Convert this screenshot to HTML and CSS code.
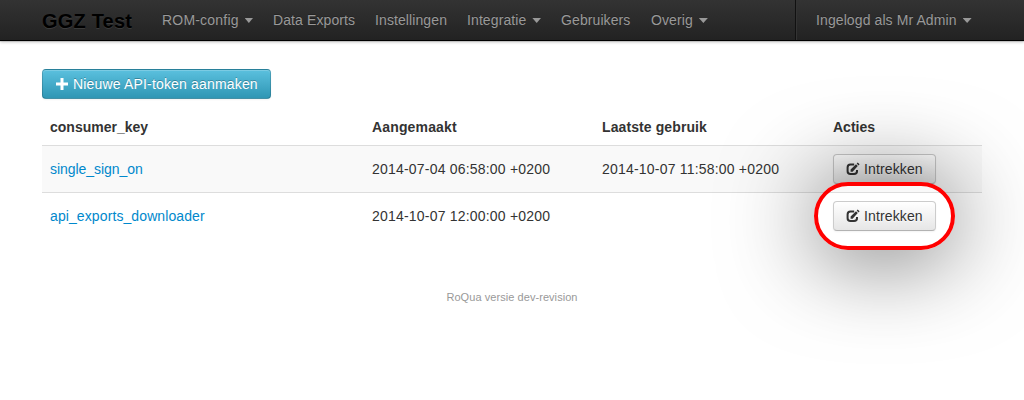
FILE: index.html
```html
<!DOCTYPE html>
<html lang="nl">
<head>
<meta charset="utf-8">
<title>GGZ Test</title>
<link rel="stylesheet" href="styles.css">
</head>
<body>
<svg class="sprite" aria-hidden="true">
  <symbol id="edit" viewBox="0 0 14 14">
    <path d="M8.2 2.6H4.5Q1.6 2.6 1.6 5.4V9.2Q1.6 12 4.5 12H8Q11 12 11 9.2V8" fill="none" stroke="currentColor" stroke-width="2"/>
    <path d="M4.6 9.8V7.6L10 2.3L11.8 4.1L6.6 9.8ZM10.7 1.5L11.7.5L13.6 2.3L12.5 3.4Z" fill="currentColor"/>
  </symbol>
</svg>
<header class="navbar">
  <a class="brand">GGZ Test</a>
  <nav class="nav">
    <a class="item rom">ROM-config<b class="caret"></b></a>
    <a class="item data">Data Exports</a>
    <a class="item inst">Instellingen</a>
    <a class="item integ">Integratie<b class="caret"></b></a>
    <a class="item users">Gebruikers</a>
    <a class="item">Overig<b class="caret"></b></a>
  </nav>
  <div class="account"><a class="item">Ingelogd als Mr Admin<b class="caret"></b></a></div>
</header>
<main class="container">
  <a class="btn btn-info"><svg class="plus" viewBox="0 0 12 12"><path d="M4.5 0h3v4.5H12v3H7.5V12h-3V7.5H0v-3h4.5z" fill="#fff"/></svg><span>Nieuwe API-token aanmaken</span></a>
  <table class="table">
    <thead><tr><th class="key">consumer_key</th><th class="created">Aangemaakt</th><th class="used">Laatste gebruik</th><th>Acties</th></tr></thead>
    <tbody>
      <tr class="odd"><td><a class="link sso">single_sign_on</a></td><td class="date">2014-07-04 06:58:00 +0200</td><td class="date">2014-10-07 11:58:00 +0200</td><td><a class="btn"><svg class="edit"><use href="#edit"/></svg><span>Intrekken</span></a></td></tr>
      <tr><td><a class="link">api_exports_downloader</a></td><td class="date">2014-10-07 12:00:00 +0200</td><td></td><td><div class="target"><a class="btn"><svg class="edit"><use href="#edit"/></svg><span>Intrekken</span></a><i class="ring"></i></div></td></tr>
    </tbody>
  </table>
  <footer class="footer">RoQua versie dev-revision</footer>
</main>
</body>
</html>
```
FILE: styles.css
```css
* { box-sizing: border-box; }
html { height: 100%; }
body { margin: 0; min-height: 100%; overflow: hidden; background: #fff; color: #333; font: 14px/20px "Liberation Sans", Arial, sans-serif; }
.sprite { position: absolute; width: 0; height: 0; }
.navbar { display: flex; height: 41px; padding: 0 42px; background: linear-gradient(#333, #222); border-bottom: 1px solid #000; box-shadow: 0 1px 3px rgba(0,0,0,.25), 0 1px 0 rgba(0,0,0,.1); }
.brand { width: 110px; padding-top: 11px; color: #000; font-size: 20px; font-weight: bold; letter-spacing: .2px; text-shadow: 0 1px 0 rgba(255,255,255,.1), 0 0 30px rgba(255,255,255,.125); white-space: nowrap; }
.nav { display: flex; }
.item { display: flex; padding: 10px; color: #999; letter-spacing: .1px; text-shadow: 0 -1px 0 rgba(0,0,0,.25); white-space: nowrap; }
.rom { width: 111px; letter-spacing: .2px; }
.data { width: 102px; }
.inst { width: 92px; }
.integ { width: 94px; }
.users { width: 90px; }
.caret { width: 9px; height: 5px; margin: 8px 0 0 6px; background: #999; clip-path: polygon(0 0, 100% 0, 50% 100%); }
.account { margin-left: auto; width: 187px; border-left: 1px solid #111; box-shadow: inset 1px 0 #333; padding-left: 10px; }
.container { width: 940px; margin: 28px auto 0; }
.btn { display: inline-flex; align-items: center; height: 30px; width: 103px; padding: 0 12px; gap: 4px; color: #333; border: 1px solid #bbb; border-color: rgba(0,0,0,.2) rgba(0,0,0,.2) rgba(0,0,0,.3); border-radius: 4px; background: linear-gradient(#fff, #e6e6e6); background-clip: padding-box; box-shadow: inset 0 1px 0 rgba(255,255,255,.2), 0 1px 2px rgba(0,0,0,.05); text-shadow: 0 1px 1px rgba(255,255,255,.75); letter-spacing: .13px; white-space: nowrap; vertical-align: top; }
.btn-info { width: 229px; gap: 5px; padding-left: 13px; color: #fff; background: linear-gradient(#5bc0de, #2f96b4); background-clip: border-box; border-color: rgba(0,0,0,.15) rgba(0,0,0,.15) rgba(0,0,0,.25); text-shadow: 0 -1px 0 rgba(0,0,0,.25); letter-spacing: .17px; }
.plus { width: 12px; height: 12px; flex: none; }
.edit { width: 14px; height: 14px; flex: none; }
.table { width: 940px; margin-top: 10px; table-layout: fixed; border-collapse: collapse; }
.table th { height: 36px; padding: 8px; text-align: left; line-height: 20px; }
.table td { height: 47px; padding: 8px; border-top: 1px solid #ddd; }
.key { width: 322px; }
.created { width: 230px; letter-spacing: .15px; }
.used { width: 231px; letter-spacing: .1px; }
.odd { background: #f9f9f9; }
.link { color: #08c; letter-spacing: .1px; }
.sso { letter-spacing: -.05px; }
.date { letter-spacing: .2px; }
.target { position: relative; height: 30px; }
.ring { position: absolute; left: -19px; top: -19px; width: 141px; height: 68px; border: 4px solid #f00; border-radius: 34px; box-shadow: 0 4px 94px rgba(0,0,0,.66); }
.footer { margin-top: 47px; font-size: 11px; line-height: 20px; text-align: center; color: #999; letter-spacing: .06px; }
```
